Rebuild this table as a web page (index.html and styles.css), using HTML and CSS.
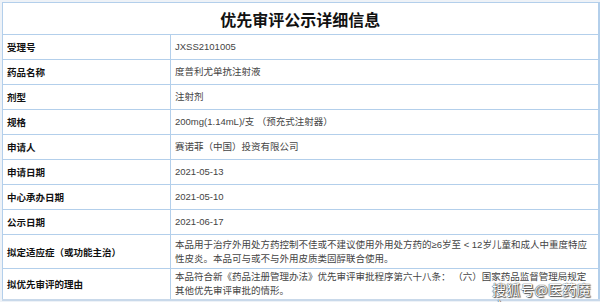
FILE: index.html
```html
<!DOCTYPE html>
<html lang="zh">
<head>
<meta charset="utf-8">
<link rel="stylesheet" href="styles.css">
</head>
<body>
<div class="page">
  <table class="info">
    <colgroup><col class="c-key"><col class="c-val"></colgroup>
    <tr class="title-row"><th colspan="2">优先审评公示详细信息</th></tr>
    <tr><td class="k">受理号</td><td class="v">JXSS2101005</td></tr>
    <tr><td class="k">药品名称</td><td class="v">度普利尤单抗注射液</td></tr>
    <tr><td class="k">剂型</td><td class="v">注射剂</td></tr>
    <tr><td class="k">规格</td><td class="v">200mg(1.14mL)/支 （预充式注射器）</td></tr>
    <tr><td class="k">申请人</td><td class="v">赛诺菲（中国）投资有限公司</td></tr>
    <tr><td class="k">申请日期</td><td class="v">2021-05-13</td></tr>
    <tr><td class="k">中心承办日期</td><td class="v">2021-05-10</td></tr>
    <tr><td class="k">公示日期</td><td class="v">2021-06-17</td></tr>
    <tr class="tall"><td class="k">拟定适应症（或功能主治）</td><td class="v">本品用于治疗外用处方药控制不佳或不建议使用外用处方药的≥6岁至 &lt; 12岁儿童和成人中重度特应性皮炎。本品可与或不与外用皮质类固醇联合使用。</td></tr>
    <tr class="tall last"><td class="k">拟优先审评的理由</td><td class="v">本品符合新《药品注册管理办法》优先审评审批程序第六十八条： （六）国家药品监督管理局规定其他优先审评审批的情形。</td></tr>
  </table>
  <div class="watermark">搜狐号@医药魔方</div>
</div>
</body>
</html>
```

FILE: styles.css
```css
html, body {
  margin: 0;
  padding: 0;
  background: #fff;
}
.page {
  position: relative;
  width: 600px;
  height: 302px;
  padding: 2px 0 0 2px;
  box-sizing: border-box;
  background: #eef2f7;
}
.info {
  border-collapse: collapse;
  width: 596px;
  background: #fff;
  font-family: "Liberation Sans", "Noto Sans CJK SC", sans-serif;
  font-size: 9.5px;
  table-layout: fixed;
}
.c-key { width: 168px; }
.c-val { width: 428px; }
.info td, .info th {
  border: 1px solid #b3cfeb;
  padding: 0 4px;
  vertical-align: middle;
  overflow: hidden;
}
.info tr:first-child th {
  border-right-width: 2px;
}
.info td.v {
  border-right: 2px solid #b3cfeb;
}
.title-row th {
  height: 31px;
  font-size: 16px;
  font-weight: bold;
  color: #111;
  text-align: center;
  padding: 0;
}
.info tr td {
  height: 24px;
}
.k {
  font-weight: bold;
  color: #111;
}
.v {
  color: #444;
  line-height: 14px;
  padding-right: 10px;
}
.info tr.tall td {
  height: 33px;
}
.info tr.tall.last td {
  height: 30px;
  border-bottom: 2px solid #c9d9ea;
}
.watermark {
  position: absolute;
  left: 492px;
  top: 281px;
  font-family: "Noto Sans CJK SC", sans-serif;
  font-size: 14px;
  line-height: 17px;
  color: #fff;
  letter-spacing: 0.2px;
  text-shadow: 0 0 1px #333, 0 0 1px #333, 1px 1px 1px #555;
}
```
